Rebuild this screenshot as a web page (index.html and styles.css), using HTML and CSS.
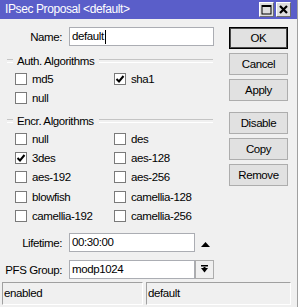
FILE: index.html
```html
<!DOCTYPE html>
<html lang="en">
<head>
    <meta charset="UTF-8">
    <title>IPsec Proposal &lt;default&gt;</title>
    <link rel="stylesheet" href="styles.css">
</head>
<body>
    <div class="window">
        <div class="titlebar">
            <span class="title">IPsec Proposal &lt;default&gt;</span>
            <div class="title-btns">
                <span class="tbtn">
                    <svg width="11" height="11" viewBox="0 0 11 11"><rect x="1" y="1.5" width="9" height="8.5" fill="none" stroke="#000" stroke-width="1"/><line x1="1" y1="2" x2="10" y2="2" stroke="#000" stroke-width="2"/></svg>
                </span>
                <span class="tbtn">
                    <svg width="11" height="11" viewBox="0 0 11 11"><path d="M2 2 L9 9 M9 2 L2 9" stroke="#000" stroke-width="2.2"/></svg>
                </span>
            </div>
        </div>

        <div class="main">
            <div class="form">
                <div class="field">
                    <span class="field-label">Name:</span>
                    <div class="input">default<span class="caret"></span></div>
                </div>

                <div class="group">Auth. Algorithms</div>
                <div class="checks">
                    <div class="check"><span class="box"></span>md5</div>
                    <div class="check"><span class="box checked"></span>sha1</div>
                    <div class="check"><span class="box"></span>null</div>
                </div>

                <div class="group group-encr">Encr. Algorithms</div>
                <div class="checks">
                    <div class="check"><span class="box"></span>null</div>
                    <div class="check"><span class="box"></span>des</div>
                    <div class="check"><span class="box checked"></span>3des</div>
                    <div class="check"><span class="box"></span>aes-128</div>
                    <div class="check"><span class="box"></span>aes-192</div>
                    <div class="check"><span class="box"></span>aes-256</div>
                    <div class="check"><span class="box"></span>blowfish</div>
                    <div class="check"><span class="box"></span>camellia-128</div>
                    <div class="check"><span class="box"></span>camellia-192</div>
                    <div class="check"><span class="box"></span>camellia-256</div>
                </div>

                <div class="field field-lifetime">
                    <span class="field-label">Lifetime:</span>
                    <div class="input input-short">00:30:00</div>
                    <svg class="up-arrow" width="9" height="5" viewBox="0 0 9 5"><path d="M0 5 L4.5 0 L9 5 Z" fill="#000"/></svg>
                </div>

                <div class="field field-pfs">
                    <span class="field-label">PFS Group:</span>
                    <div class="input input-short">modp1024</div>
                    <span class="drop-btn">
                        <svg width="9" height="9" viewBox="0 0 9 9"><rect x="1" y="0" width="7" height="1.5" fill="#000"/><path d="M1 3 L8 3 L4.5 7.5 Z" fill="#000"/><rect x="3.5" y="2" width="2" height="2" fill="#000"/></svg>
                    </span>
                </div>
            </div>

            <div class="buttons">
                <button class="btn btn-default">OK</button>
                <button class="btn">Cancel</button>
                <button class="btn">Apply</button>
                <button class="btn btn-gap">Disable</button>
                <button class="btn">Copy</button>
                <button class="btn">Remove</button>
            </div>
        </div>

        <div class="statusbar">
            <div class="panel panel-left">enabled</div>
            <div class="panel panel-right">default</div>
        </div>
    </div>
</body>
</html>
```

FILE: styles.css
```css
* {
    margin: 0;
    padding: 0;
    box-sizing: border-box;
}

body {
    font-family: "Liberation Sans", Arial, sans-serif;
    font-size: 11.5px;
    letter-spacing: -0.4px;
    color: #000;
    background: #f0f0f0;
}

.window {
    width: 298px;
    height: 307px;
    background: #f0f0f0;
    border-right: 1px solid #a0a0a0;
}

/* title bar */
.titlebar {
    height: 19px;
    background: #5a5ec9;
    display: flex;
    align-items: center;
    justify-content: space-between;
    padding: 0 6px 0 5px;
}

.title {
    color: #fff;
    line-height: 19px;
    font-size: 12px;
}

.title-btns {
    display: flex;
    gap: 2px;
}

.tbtn {
    width: 15px;
    height: 15px;
    background: #dedede;
    border: 1px solid;
    border-color: #fff #6e6e6e #6e6e6e #fff;
    display: flex;
    align-items: center;
    justify-content: center;
}

/* main area */
.main {
    display: flex;
    height: 262px;
}

.form {
    width: 229px;
    padding-top: 8px;
}

.field {
    display: flex;
    align-items: center;
    height: 19px;
}

.field-label {
    width: 62px;
    text-align: right;
    white-space: nowrap;
    margin-right: 7px;
}

.input {
    width: 145px;
    height: 19px;
    background: #fff;
    border: 1px solid #abadb3;
    padding-left: 2px;
    line-height: 17px;
    display: flex;
    align-items: center;
}

.input-short {
    width: 126px;
}

.caret {
    width: 1px;
    height: 14px;
    background: #000;
    margin-left: 1px;
}

.up-arrow {
    margin-left: 6px;
    margin-top: 3px;
}

.drop-btn {
    width: 19px;
    height: 19px;
    border: 1px solid #adadad;
    background: #f0f0f0;
    display: flex;
    align-items: center;
    justify-content: center;
}

.field-lifetime {
    margin-top: 8px;
}

.field-pfs {
    margin-top: 8px;
}

/* group headers */
.group {
    display: flex;
    align-items: center;
    width: 206px;
    height: 16px;
    margin: 7px 0 0 7px;
}

.group::before,
.group::after {
    content: "";
    height: 2px;
    border-top: 1px solid #c4c4c4;
    border-bottom: 1px solid #fff;
}

.group::before {
    width: 6px;
    margin-right: 4px;
}

.group::after {
    flex: 1;
    margin-left: 5px;
}

.group-encr {
    margin-top: 6px;
}

.checks {
    display: grid;
    grid-template-columns: 99px 99px;
    padding-left: 15px;
}

.check {
    display: flex;
    align-items: center;
    height: 19.2px;
}

.box {
    width: 12px;
    height: 12px;
    border: 1px solid #7a7a7a;
    background: #fff;
    margin-right: 5px;
}

.box.checked {
    background: #fff url("data:image/svg+xml,%3Csvg xmlns='http://www.w3.org/2000/svg' width='10' height='10'%3E%3Cpath d='M1.5 5 L4 7.5 L8.5 2' fill='none' stroke='%23000' stroke-width='2'/%3E%3C/svg%3E") center no-repeat;
}

/* right buttons */
.buttons {
    display: flex;
    flex-direction: column;
    gap: 4px;
    padding-top: 8px;
}

.btn {
    width: 59px;
    height: 22px;
    font-family: inherit;
    font-size: 11.5px;
    letter-spacing: -0.4px;
    background: #e1e1e1;
    border: 1px solid #adadad;
    color: #000;
}

.btn-default {
    border: 1px solid #000;
    box-shadow: inset 0 0 0 1px #4a4a4a;
}

.btn-gap {
    margin-top: 7px;
}

/* status bar */
.statusbar {
    display: flex;
    gap: 3px;
    padding: 1px 0 0 2px;
    height: 26px;
}

.panel {
    height: 23px;
    border: 1px solid;
    border-color: #a0a0a0 #fff #fff #a0a0a0;
    padding-left: 1px;
    line-height: 21px;
}

.panel-left {
    width: 141px;
}

.panel-right {
    width: 145px;
}
```
